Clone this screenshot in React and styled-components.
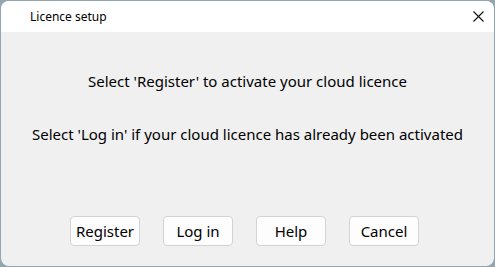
import styled, { createGlobalStyle } from 'styled-components';

const GlobalStyle = createGlobalStyle`
  html, body {
    margin: 0;
    padding: 0;
    background: #93a6b0;
  }
  body {
    font-family: 'Noto Sans', 'Open Sans', sans-serif;
    color: #000;
  }
`;

const Window = styled.div`
  width: 493px;
  height: 265px;
  margin: 1px;
  border-radius: 8px;
  overflow: hidden;
  display: flex;
  flex-direction: column;
  background: #f0f0f0;
`;

const TitleBar = styled.div`
  height: 31px;
  flex: none;
  background: #fff;
  display: flex;
  align-items: center;
  justify-content: space-between;
  padding: 0 10px 0 29px;
  font-size: 12px;
`;

const CloseButton = styled.button`
  border: 0;
  background: transparent;
  padding: 0;
  width: 12px;
  height: 12px;
  display: flex;
  align-items: center;
  justify-content: center;
`;

const Body = styled.div`
  flex: 1;
  display: flex;
  flex-direction: column;
  align-items: center;
  padding-top: 39px;
`;

const Message = styled.p`
  margin: 0 0 ${(p) => p.gap || 0}px;
  font-size: 15px;
  line-height: 20px;
  white-space: nowrap;
`;

const ButtonRow = styled.div`
  margin-top: auto;
  margin-bottom: 20px;
  display: flex;
  gap: 23px;
  padding-right: 6px;
`;

const Button = styled.button`
  width: 70px;
  height: 30px;
  border: 1px solid #d3d3d3;
  border-radius: 4px;
  background: #fdfdfd;
  font-family: inherit;
  font-size: 15px;
  color: #000;
  padding: 0;
`;

const buttons = ['Register', 'Log in', 'Help', 'Cancel'];

const App = () => {
  return (
    <>
      <GlobalStyle />
      <Window>
        <TitleBar>
          <span>Licence setup</span>
          <CloseButton aria-label="Close">
            <svg width="11" height="11" viewBox="0 0 11 11">
              <path d="M0.5 0.5 L10.5 10.5 M10.5 0.5 L0.5 10.5" stroke="#111" strokeWidth="1.1" />
            </svg>
          </CloseButton>
        </TitleBar>
        <Body>
          <Message gap={33}>Select 'Register' to activate your cloud licence</Message>
          <Message>Select 'Log in' if your cloud licence has already been activated</Message>
          <ButtonRow>
            {buttons.map((label) => (
              <Button key={label}>{label}</Button>
            ))}
          </ButtonRow>
        </Body>
      </Window>
    </>
  );
};

export default App;
